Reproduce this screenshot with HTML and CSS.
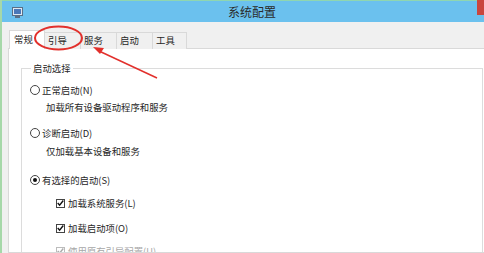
FILE: index.html
```html
<!DOCTYPE html>
<html lang="zh-CN">
<head>
<meta charset="utf-8">
<title>系统配置</title>
<link rel="stylesheet" href="styles.css">
</head>
<body>
<div class="window">
  <div class="titlebar">
    <svg class="app-icon" width="11" height="11" viewBox="0 0 11 11">
      <rect x="0.5" y="0.5" width="10" height="8" fill="#dfe8f2" stroke="#5a6f86"/>
      <rect x="2" y="2" width="7" height="5" fill="#4a78b8"/>
      <rect x="3" y="9" width="5" height="2" fill="#5a6f86"/>
    </svg>
    <div class="title">系统配置</div>
    <div class="close"></div>
  </div>
  <div class="body">
    <div class="tabs">
      <div class="tab active">常规</div>
      <div class="tab">引导</div>
      <div class="tab">服务</div>
      <div class="tab">启动</div>
      <div class="tab last">工具</div>
    </div>
    <div class="panel">
      <fieldset class="group">
        <legend>启动选择</legend>
        <div class="opt r1"><span class="radio"></span>正常启动(N)</div>
        <div class="desc d1">加载所有设备驱动程序和服务</div>
        <div class="opt r2"><span class="radio"></span>诊断启动(D)</div>
        <div class="desc d2">仅加载基本设备和服务</div>
        <div class="opt r3"><span class="radio checked"></span>有选择的启动(S)</div>
        <div class="opt sub c1"><span class="check"><svg width="8" height="8" viewBox="0 0 8 8"><path d="M0.8 4 L3 6.4 L7.2 1.2" fill="none" stroke="#111" stroke-width="1.6"/></svg></span>加载系统服务(L)</div>
        <div class="opt sub c2"><span class="check"><svg width="8" height="8" viewBox="0 0 8 8"><path d="M0.8 4 L3 6.4 L7.2 1.2" fill="none" stroke="#111" stroke-width="1.6"/></svg></span>加载启动项(O)</div>
        <div class="opt sub c3 disabled"><span class="check"><svg width="8" height="8" viewBox="0 0 8 8"><path d="M0.8 4 L3 6.4 L7.2 1.2" fill="none" stroke="#aaa" stroke-width="1.6"/></svg></span>使用原有引导配置(U)</div>
      </fieldset>
    </div>
  </div>
  <svg class="annot" width="484" height="253" viewBox="0 0 484 253">
    <ellipse cx="58.5" cy="38" rx="23.5" ry="11.5" fill="none" stroke="#e2302c" stroke-width="2"/>
    <line x1="157" y1="78" x2="99" y2="51" stroke="#e2302c" stroke-width="1.5"/>
    <path d="M93 47 L104 48 L100 54 Z" fill="#e2302c"/>
  </svg>
</div>
</body>
</html>
```
FILE: styles.css
```css
* { box-sizing: border-box; }
html, body { margin: 0; padding: 0; }
body {
  width: 484px;
  height: 253px;
  overflow: hidden;
  background: #f0f0f0;
  font-family: "Noto Sans CJK SC", "Noto Sans", sans-serif;
  font-size: 9.4px;
  color: #262626;
}
.window {
  position: relative;
  width: 484px;
  height: 253px;
  border-left: 2px solid #a6d8a9;
  overflow: hidden;
}
.titlebar {
  height: 22px;
  flex: none;
  background: #6bc1ee;
  border-top: 1px solid #8fd6b0;
  display: flex;
  align-items: center;
  position: relative;
}
.app-icon { margin-left: 10px; margin-top: 1px; }
.title {
  margin-left: 205px;
  font-size: 12px;
  color: #2a2a2a;
  line-height: 16px;
}
.close {
  position: absolute;
  right: 0;
  top: -1px;
  width: 7px;
  height: 15px;
  background: #c9463e;
}
.body {
  height: 231px;
  display: flex;
  flex-direction: column;
  padding-left: 6px;
}
.tabs {
  display: flex;
  flex: none;
  align-items: flex-end;
  height: 26px;
  padding-left: 1px;
}
.tab {
  height: 17px;
  width: 36px;
  border: 1px solid #d9d9d9;
  border-bottom: none;
  border-left: none;
  background: #f0f0f0;
  display: flex;
  align-items: center;
  padding-left: 3px;
  color: #262626;
  line-height: 1;
  margin-bottom: -1px;
  position: relative;
  z-index: 1;
}
.tab.last { width: 34px; }
.tab.active {
  height: 19px;
  width: 36px;
  background: #fff;
  border-left: 1px solid #d9d9d9;
  padding-left: 4px;
  padding-bottom: 1px;
  z-index: 2;
}
.panel {
  flex: 1;
  min-height: 0;
  overflow: hidden;
  background: #fff;
  border: 1px solid #d9d9d9;
  margin-right: -12px;
  padding: 12px 0 0 12px;
}
.group {
  margin: 0;
  padding: 0 0 0 8px;
  border: 1px solid #dcdcdc;
  border-bottom: none;
  width: 462px;
  height: 240px;
}
.group legend {
  padding: 0 2px;
  margin-left: 1px;
  line-height: 14px;
}
.opt {
  display: flex;
  align-items: center;
  height: 16px;
  line-height: 16px;
  white-space: nowrap;
}
.desc {
  height: 16px;
  line-height: 16px;
  padding-left: 16px;
}
.r1 { margin-top: 7px; }
.d1 { margin-top: 1px; }
.r2 { margin-top: 10px; }
.d2 { margin-top: 2px; }
.r3 { margin-top: 13px; }
.c1 { margin-top: 7px; }
.c2 { margin-top: 9px; }
.c3 { margin-top: 7px; }
.sub { padding-left: 26px; }
.radio {
  width: 10px;
  height: 10px;
  border: 1px solid #444;
  border-radius: 50%;
  margin-right: 2px;
  background: #fff;
  display: flex;
  align-items: center;
  justify-content: center;
  flex: none;
}
.radio.checked::after {
  content: "";
  width: 4px;
  height: 4px;
  border-radius: 50%;
  background: #111;
}
.check {
  width: 9px;
  height: 9px;
  border: 1px solid #444;
  margin-right: 3px;
  display: flex;
  align-items: center;
  justify-content: center;
  flex: none;
  background: #fff;
}
.disabled { color: #a8a8a8; }
.disabled .check { border-color: #bcbcbc; }
.annot {
  position: absolute;
  left: -2px;
  top: 0;
  z-index: 10;
  pointer-events: none;
}
```
